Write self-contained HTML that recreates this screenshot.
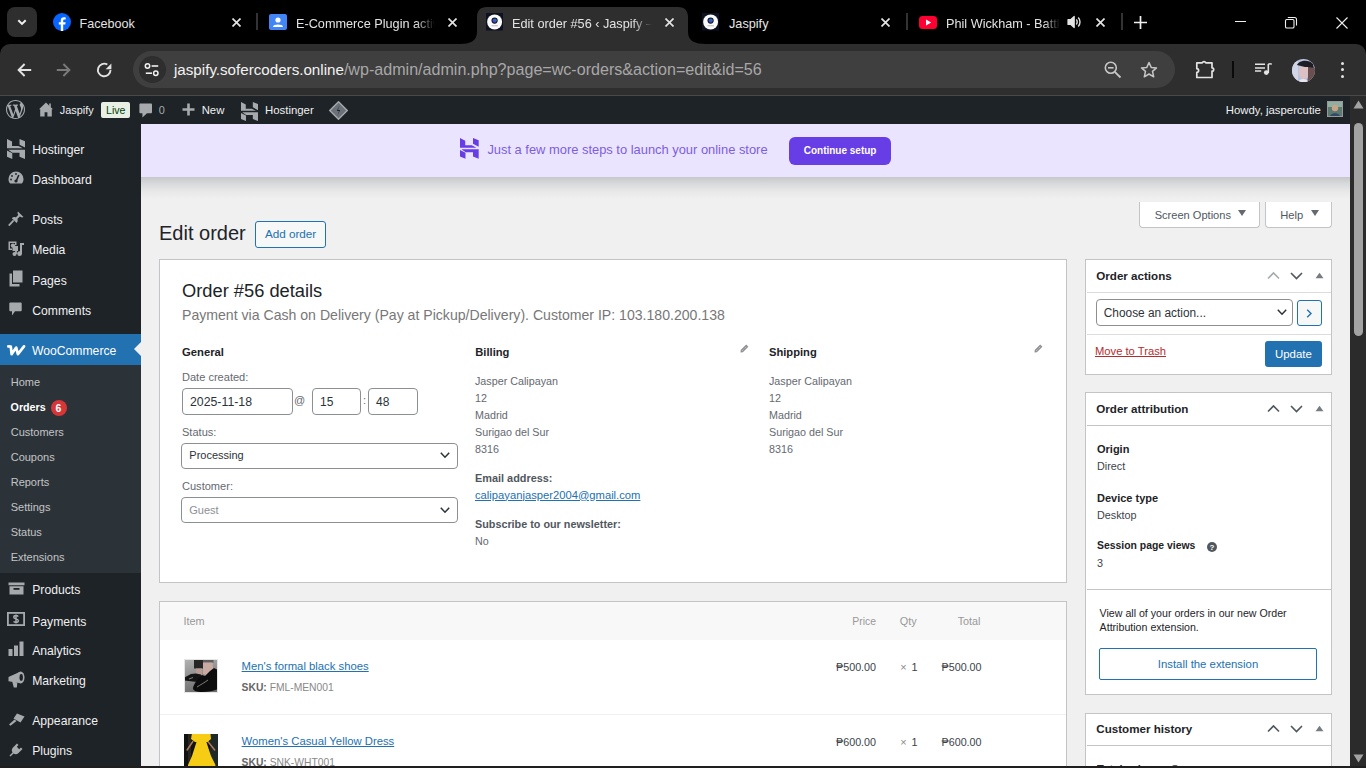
<!DOCTYPE html>
<html><head><meta charset="utf-8"><title>Edit order</title>
<style>
html,body{margin:0;padding:0;width:1366px;height:768px;overflow:hidden;background:#000;font-family:"Liberation Sans",sans-serif;}
.a{position:absolute;}
.t{position:absolute;line-height:1;white-space:nowrap;}
.fade{overflow:hidden;-webkit-mask-image:linear-gradient(90deg,#000 86%,transparent);mask-image:linear-gradient(90deg,#000 86%,transparent);}
svg{display:block;}
</style></head><body>
<div class="a" style="left:0px;top:0px;width:1366px;height:44px;background:#000"></div>
<div class="a" style="left:7px;top:7px;width:30px;height:30px;background:#2e2e2e;border-radius:8px"></div>
<svg class="a" style="left:16px;top:16px" width="12" height="12" viewBox="0 0 12 12"><path d="M2.3 4.2 L6 7.9 L9.7 4.2" fill="none" stroke="#f0f0f0" stroke-width="2"/></svg>
<svg class="a" style="left:53px;top:13px" width="18" height="18" viewBox="0 0 18 18"><circle cx="9" cy="9" r="9" fill="#0866ff"/><path d="M10.2 18 V11.6 H12.3 L12.6 9.2 H10.2 V7.8 C10.2 7.1 10.5 6.6 11.5 6.6 H12.7 V4.5 C12.4 4.4 11.7 4.3 10.9 4.3 C9 4.3 7.8 5.4 7.8 7.5 V9.2 H5.8 V11.6 H7.8 V18 Z" fill="#fff"/></svg>
<div class="t" style="left:79.6px;top:18.33px;font-size:12.6px;color:#e3e3e3;font-weight:400;">Facebook</div>
<svg class="a" style="left:231.7px;top:17.8px" width="9" height="9" viewBox="0 0 9 9"><path d="M0.5 0.5 L8.5 8.5 M8.5 0.5 L0.5 8.5" stroke="#e3e3e3" stroke-width="1.7"/></svg>
<div class="a" style="left:256px;top:13px;width:2px;height:17px;background:#333"></div>
<svg class="a" style="left:269px;top:14px" width="18" height="16" viewBox="0 0 18 16"><rect width="18" height="16" rx="2" fill="#4285f4"/><circle cx="9" cy="6" r="2.6" fill="#fff"/><path d="M4 13 C4 9.8 14 9.8 14 13 Z" fill="#fff"/></svg>
<div class="t fade" style="left:296px;top:18.2px;font-size:12.7px;color:#e3e3e3;width:139px">E-Commerce Plugin activity</div>
<svg class="a" style="left:448.0px;top:17.8px" width="9" height="9" viewBox="0 0 9 9"><path d="M0.5 0.5 L8.5 8.5 M8.5 0.5 L0.5 8.5" stroke="#e3e3e3" stroke-width="1.7"/></svg>
<svg class="a" style="left:460px;top:7px" width="246" height="37" viewBox="0 0 246 37"><path d="M0 37 C10 37 17 34 17 25 V10 C17 4 20 0 27 0 H218 C225 0 228 4 228 10 V25 C228 34 235 37 246 37 Z" fill="#2e2e2e"/></svg>
<svg class="a" style="left:486px;top:13px" width="17" height="18" viewBox="0 0 17 18"><defs><linearGradient id="lg486" x1="0" y1="1" x2="1" y2="0"><stop offset="0" stop-color="#5a2fd0"/><stop offset="0.6" stop-color="#2f5fb8"/><stop offset="1" stop-color="#1fa08a"/></linearGradient></defs><rect width="17" height="17.5" fill="#0d1122"/><circle cx="8.6" cy="8.9" r="7.5" fill="#fbfbfb"/><circle cx="8.6" cy="7.6" r="3.1" fill="#0a0f1a"/><circle cx="8.6" cy="7.6" r="2.2" fill="url(#lg486)"/><rect x="5.5" y="12.2" width="6.5" height="1.1" fill="#c0c0c0"/></svg>
<div class="t fade" style="left:512px;top:18.2px;font-size:12.7px;color:#e3e3e3;width:140px">Edit order #56 ‹ Jaspify — WordPress</div>
<svg class="a" style="left:664.7px;top:17.8px" width="9" height="9" viewBox="0 0 9 9"><path d="M0.5 0.5 L8.5 8.5 M8.5 0.5 L0.5 8.5" stroke="#e3e3e3" stroke-width="1.7"/></svg>
<svg class="a" style="left:702px;top:13px" width="17" height="18" viewBox="0 0 17 18"><defs><linearGradient id="lg702" x1="0" y1="1" x2="1" y2="0"><stop offset="0" stop-color="#5a2fd0"/><stop offset="0.6" stop-color="#2f5fb8"/><stop offset="1" stop-color="#1fa08a"/></linearGradient></defs><rect width="17" height="17.5" fill="#0d1122"/><circle cx="8.6" cy="8.9" r="7.5" fill="#fbfbfb"/><circle cx="8.6" cy="7.6" r="3.1" fill="#0a0f1a"/><circle cx="8.6" cy="7.6" r="2.2" fill="url(#lg702)"/><rect x="5.5" y="12.2" width="6.5" height="1.1" fill="#c0c0c0"/></svg>
<div class="t" style="left:729px;top:18.25px;font-size:12.7px;color:#e8e8e8;font-weight:400;">Jaspify</div>
<svg class="a" style="left:881.1px;top:17.8px" width="9" height="9" viewBox="0 0 9 9"><path d="M0.5 0.5 L8.5 8.5 M8.5 0.5 L0.5 8.5" stroke="#e3e3e3" stroke-width="1.7"/></svg>
<div class="a" style="left:906px;top:13px;width:2px;height:17px;background:#333"></div>
<svg class="a" style="left:919px;top:16px" width="18" height="13" viewBox="0 0 18 13"><rect width="18" height="13" rx="3.5" fill="#ff0033"/><path d="M7 3.6 L12.2 6.5 L7 9.4 Z" fill="#fff"/></svg>
<div class="t fade" style="left:946px;top:18.2px;font-size:12.7px;color:#e3e3e3;width:114px">Phil Wickham - Battle Belongs</div>
<svg class="a" style="left:1067px;top:15px" width="15" height="14" viewBox="0 0 15 14"><path d="M1 4.6 H3.6 L7.2 1.4 V12.6 L3.6 9.4 H1 Z" fill="#e3e3e3" stroke="#e3e3e3" stroke-width="1.2" stroke-linejoin="round"/><path d="M9.3 4.6 C10.5 5.8 10.5 8.2 9.3 9.4 M11.2 2.6 C13.6 4.9 13.6 9.1 11.2 11.4" fill="none" stroke="#e3e3e3" stroke-width="1.4"/></svg>
<svg class="a" style="left:1096.3px;top:17.8px" width="9" height="9" viewBox="0 0 9 9"><path d="M0.5 0.5 L8.5 8.5 M8.5 0.5 L0.5 8.5" stroke="#e3e3e3" stroke-width="1.7"/></svg>
<div class="a" style="left:1121px;top:13px;width:2px;height:17px;background:#333"></div>
<svg class="a" style="left:1134px;top:16px" width="13" height="13" viewBox="0 0 13 13"><path d="M6.5 0 V13 M0 6.5 H13" stroke="#f0f0f0" stroke-width="1.7"/></svg>
<div class="a" style="left:1235px;top:21px;width:11px;height:1px;background:#f0f0f0"></div>
<svg class="a" style="left:1284px;top:16px" width="14" height="13" viewBox="0 0 14 13"><rect x="1.5" y="3.5" width="8.5" height="8.5" rx="1.3" fill="none" stroke="#f0f0f0" stroke-width="1.1"/><path d="M3.8 1.5 H10.5 C11.7 1.5 12.5 2.3 12.5 3.5 V9.5" fill="none" stroke="#f0f0f0" stroke-width="1.1"/></svg>
<svg class="a" style="left:1335.5px;top:16.5px" width="12" height="12" viewBox="0 0 12 12"><path d="M0.5 0.5 L11.5 11.5 M11.5 0.5 L0.5 11.5" stroke="#f0f0f0" stroke-width="1.1"/></svg>
<div class="a" style="left:0px;top:44px;width:1366px;height:51px;background:#2e2e2e;border-radius:10px 10px 0 0"></div>
<div class="a" style="left:0px;top:95px;width:1366px;height:1px;background:#4a4a4a"></div>
<svg class="a" style="left:17px;top:62px" width="15" height="16" viewBox="0 0 15 16"><path d="M14.2 8 H2 M7.6 2 L1.6 8 L7.6 14" fill="none" stroke="#e3e3e3" stroke-width="1.9" stroke-linejoin="miter"/></svg>
<svg class="a" style="left:56px;top:62px" width="15" height="16" viewBox="0 0 15 16"><path d="M0.8 8 H13 M7.4 2 L13.4 8 L7.4 14" fill="none" stroke="#7a7a7a" stroke-width="1.9"/></svg>
<svg class="a" style="left:96px;top:62px" width="16" height="16" viewBox="0 0 16 16"><path d="M14.5 8 A6.3 6.3 0 1 1 11.35 2.54" fill="none" stroke="#e3e3e3" stroke-width="1.9"/><path d="M9.6 7.2 H15.4 V1.4 Z" fill="#e3e3e3"/></svg>
<div class="a" style="left:133px;top:51px;width:1042px;height:37px;background:#3f3f3f;border-radius:19px"></div>
<div class="a" style="left:138.5px;top:56px;width:27px;height:27px;background:#2e2e2e;border-radius:50%"></div>
<svg class="a" style="left:144px;top:62px" width="17" height="15" viewBox="0 0 17 15"><circle cx="3.5" cy="4" r="2.2" fill="none" stroke="#f0f0f0" stroke-width="1.5"/><path d="M7.6 4 H14.2" stroke="#f0f0f0" stroke-width="1.6"/><circle cx="11.8" cy="11.2" r="2.2" fill="none" stroke="#f0f0f0" stroke-width="1.5"/><path d="M1.8 11.2 H8" stroke="#f0f0f0" stroke-width="1.6"/></svg>
<div class="t" style="left:174px;top:60.86px;font-size:15.17px;color:#f2f2f2;font-weight:400;">jaspify.sofercoders.online<span style="color:#a8a8a8;font-size:16.08px">/wp-admin/admin.php?page=wc-orders&amp;action=edit&amp;id=56</span></div>
<svg class="a" style="left:1104px;top:61px" width="18" height="18" viewBox="0 0 18 18"><circle cx="6.8" cy="6.8" r="5.5" fill="none" stroke="#c7c7c7" stroke-width="1.6"/><path d="M10.8 10.8 L16.5 16.5" stroke="#c7c7c7" stroke-width="1.8"/><path d="M4 6.8 H9.6" stroke="#c7c7c7" stroke-width="1.6"/></svg>
<svg class="a" style="left:1140px;top:61px" width="18" height="18" viewBox="0 0 18 18"><path d="M9 1.5 L11.2 6.4 L16.5 6.9 L12.5 10.4 L13.7 15.8 L9 13 L4.3 15.8 L5.5 10.4 L1.5 6.9 L6.8 6.4 Z" fill="none" stroke="#c7c7c7" stroke-width="1.5" stroke-linejoin="round"/></svg>
<svg class="a" style="left:1195px;top:59px" width="20" height="21" viewBox="0 0 20 21"><path d="M1.8 3.8 H7.2 A2 2 0 0 1 10.8 3.8 H17 V8.8 A1.7 1.7 0 0 1 17 12.2 V18.5 H1.8 V13.3 A1.8 1.8 0 0 0 1.8 9.7 Z" fill="none" stroke="#e3e3e3" stroke-width="1.7" stroke-linejoin="round"/></svg>
<div class="a" style="left:1232px;top:61px;width:2px;height:17px;background:#0a0a0a"></div>
<svg class="a" style="left:1254px;top:60px" width="19" height="17" viewBox="0 0 19 17"><path d="M1 4.3 H11 M1 7.9 H11 M1 11.1 H7.2" stroke="#e3e3e3" stroke-width="1.5"/><path d="M14.3 4 V13" stroke="#e3e3e3" stroke-width="1.6"/><path d="M14.3 3.9 H17.8" stroke="#e3e3e3" stroke-width="1.5"/><circle cx="12.3" cy="12.6" r="2.4" fill="#e3e3e3"/></svg>
<svg class="a" style="left:1292px;top:59px" width="23" height="23" viewBox="0 0 23 23"><defs><clipPath id="av"><circle cx="11.5" cy="11.5" r="11.5"/></clipPath></defs><g clip-path="url(#av)"><rect width="23" height="23" fill="#b9c2dc"/><rect x="0" y="0" width="6" height="23" fill="#d0d6e8"/><path d="M5 6 C7 1 17 0 21 5 L22 10 L17 9 L9 7 Z" fill="#1c1c24"/><path d="M7 8 L16 8 L17 14 L15 19 L10 20 L7 16 Z" fill="#dcc0c4"/><path d="M16 8 L23 9 V23 H15 L16 18 Z" fill="#6a4f50"/><path d="M6 23 C8 19 14 19 17 23 Z" fill="#e9e6ef"/></g></svg>
<div class="a" style="left:1341px;top:61.9px;width:3.2px;height:3.2px;background:#e3e3e3;border-radius:50%"></div>
<div class="a" style="left:1341px;top:68.2px;width:3.2px;height:3.2px;background:#e3e3e3;border-radius:50%"></div>
<div class="a" style="left:1341px;top:74.5px;width:3.2px;height:3.2px;background:#e3e3e3;border-radius:50%"></div>
<div class="a" style="left:0px;top:96px;width:1350px;height:28px;background:#1d2327"></div>
<svg class="a" style="left:6px;top:100px" width="19" height="19" viewBox="0 0 20 20"><path fill="#a7aaad" d="M20 10c0-5.51-4.49-10-10-10C4.48 0 0 4.49 0 10c0 5.52 4.48 10 10 10 5.51 0 10-4.48 10-10zM7.78 15.37L4.37 6.22c.55-.02 1.17-.08 1.17-.08.5-.06.44-1.13-.06-1.11 0 0-1.45.11-2.37.11-.18 0-.37 0-.58-.01C4.12 2.69 6.87 1.11 10 1.11c2.33 0 4.45.87 6.05 2.34-.68-.11-1.65.39-1.65 1.58 0 .74.45 1.36.9 2.1.35.61.55 1.36.55 2.46 0 1.49-1.4 5-1.4 5l-3.03-8.37c.54-.02.82-.17.82-.17.5-.05.44-1.25-.06-1.22 0 0-1.44.12-2.38.12-.87 0-2.33-.12-2.33-.12-.5-.03-.56 1.2-.06 1.22l.92.08 1.26 3.41zM17.41 10c.24-.64.74-1.87.43-4.25.7 1.29 1.05 2.71 1.05 4.25 0 3.29-1.73 6.24-4.4 7.78.97-2.59 1.94-5.2 2.92-7.78zM6.1 18.09C3.12 16.65 1.11 13.53 1.11 10c0-1.3.23-2.48.72-3.59 1.42 3.89 2.84 7.79 4.27 11.68zm4.03-6.63l2.62 7.1c-.87.29-1.8.44-2.75.44-.8 0-1.58-.11-2.33-.33 .82-2.41 1.64-4.81 2.46-7.21z"/></svg>
<svg class="a" style="left:39px;top:102px" width="14" height="15" viewBox="0 0 14 15"><path d="M7 0.5 L0 7.3 L1.2 7.3 V14.5 H5.6 V10.2 H8.4 V14.5 H12.8 V7.3 L14 7.3 L11.8 5.2 V1.5 H10.2 V3.7 Z" fill="#a7aaad"/></svg>
<div class="t" style="left:59.8px;top:105.07px;font-size:10.9px;color:#f0f0f1;font-weight:400;">Jaspify</div>
<div class="a" style="left:101px;top:102px;width:29px;height:16px;background:#e8f0e6;border-radius:2px"></div>
<div class="t" style="left:106px;top:105.32px;font-size:10.6px;color:#00400a;font-weight:400;">Live</div>
<svg class="a" style="left:138.5px;top:102.5px" width="14" height="15" viewBox="0 0 14 15"><path d="M1.5 0.5 H11.8 C12.6 0.5 13 0.9 13 1.7 V9 C13 9.8 12.6 10.3 11.8 10.3 H8 L3.4 14.5 V10.3 H1.5 C0.8 10.3 0.4 9.8 0.4 9 V1.7 C0.4 0.9 0.8 0.5 1.5 0.5 Z" fill="#a7aaad"/></svg>
<div class="t" style="left:158.8px;top:105.07px;font-size:10.9px;color:#a7aaad;font-weight:400;">0</div>
<svg class="a" style="left:182px;top:103px" width="13" height="13" viewBox="0 0 13 13"><path d="M6.5 0.5 V12.5 M0.5 6.5 H12.5" stroke="#a7aaad" stroke-width="2.6"/></svg>
<div class="t" style="left:201.7px;top:104.73px;font-size:11.3px;color:#f0f0f1;font-weight:400;">New</div>
<svg class="a" style="left:241px;top:102px" width="17" height="19" viewBox="0 0 410 455" preserveAspectRatio="none"><path fill="#a7aaad" d="M0 0 L115 58 L115 160 L260 160 L360 212 L0 212 Z M285 0 L410 50 L410 195 L285 128 Z M30 245 L410 245 L410 455 L285 405 L285 312 L125 312 Z M0 262 L120 322 L120 455 L0 405 Z"/></svg>
<div class="t" style="left:265px;top:104.65px;font-size:11.4px;color:#f0f0f1;font-weight:400;">Hostinger</div>
<svg class="a" style="left:329px;top:101px" width="19" height="19" viewBox="0 0 19 19"><path d="M9.5 0.8 L18.2 9.5 L9.5 18.2 L0.8 9.5 Z" fill="#6b7178" stroke="#a7aaad" stroke-width="1.4"/><path d="M10.5 4.5 L7.8 10 H10 L8.5 14.5 L11.2 9 H9 Z" fill="#1d2327"/></svg>
<div class="t" style="left:1225.8px;top:104.67px;font-size:11.37px;color:#f0f0f1;font-weight:400;">Howdy, jaspercutie</div>
<svg class="a" style="left:1327px;top:101px" width="16" height="16" viewBox="0 0 16 16"><rect width="16" height="16" fill="#5c7a6e"/><rect x="0" y="0" width="16" height="6" fill="#8fb0a0"/><circle cx="8" cy="7" r="3.2" fill="#c9a38a"/><path d="M3 16 C3 11 13 11 13 16 Z" fill="#2e4a6a"/><rect x="0.5" y="0.5" width="15" height="15" fill="none" stroke="#999" stroke-width="1"/></svg>
<div class="a" style="left:1350px;top:96px;width:16px;height:670px;background:#2b2b2b"></div>
<svg class="a" style="left:1353px;top:100px" width="11" height="9" viewBox="0 0 11 9"><path d="M5.5 0.5 L10.5 8.5 H0.5 Z" fill="#a3a3a3"/></svg>
<div class="a" style="left:1354px;top:123px;width:9px;height:213px;background:#a3a3a3;border-radius:5px"></div>
<svg class="a" style="left:1353px;top:752px" width="11" height="9" viewBox="0 0 11 9"><path d="M5.5 8.5 L10.5 0.5 H0.5 Z" fill="#a3a3a3"/></svg>
<div class="a" style="left:0px;top:766px;width:1366px;height:2px;background:#1f1f1f"></div>
<div class="a" style="left:141px;top:124px;width:1209px;height:642px;background:#f0f0f1"></div>
<div class="a" style="left:0px;top:124px;width:141px;height:642px;background:#1d2327"></div>
<div class="a" style="left:0px;top:334px;width:141px;height:31px;background:#2271b1"></div>
<svg class="a" style="left:134px;top:342px" width="7" height="14" viewBox="0 0 7 14"><path d="M7 0 L0 7 L7 14 Z" fill="#f0f0f1"/></svg>
<div class="a" style="left:0px;top:365px;width:141px;height:208px;background:#2c3338"></div>
<svg class="a" style="left:7px;top:139px" width="18" height="20" viewBox="0 0 410 455" preserveAspectRatio="none"><path fill="#a7aaad" d="M0 0 L115 58 L115 160 L260 160 L360 212 L0 212 Z M285 0 L410 50 L410 195 L285 128 Z M30 245 L410 245 L410 455 L285 405 L285 312 L125 312 Z M0 262 L120 322 L120 455 L0 405 Z"/></svg>
<div class="t" style="left:32.2px;top:143.97px;font-size:12.2px;color:#f0f0f1;font-weight:400;">Hostinger</div>
<svg class="a" style="left:8px;top:171px" width="16" height="13" viewBox="0 0 16 13"><path d="M8 0.5 A7.5 7.5 0 0 0 0.5 8 C0.5 10 1.2 11.5 2.2 12.5 H13.8 C14.8 11.5 15.5 10 15.5 8 A7.5 7.5 0 0 0 8 0.5 Z" fill="#a7aaad"/><path d="M8 10.5 L10.8 4" stroke="#1d2327" stroke-width="1.6"/><circle cx="8" cy="10" r="1.6" fill="#1d2327"/><circle cx="4" cy="5" r="0.9" fill="#1d2327"/><circle cx="8" cy="3" r="0.9" fill="#1d2327"/><circle cx="3" cy="8.5" r="0.9" fill="#1d2327"/></svg>
<div class="t" style="left:32.2px;top:174.07px;font-size:12.2px;color:#f0f0f1;font-weight:400;">Dashboard</div>
<svg class="a" style="left:8px;top:211px" width="16" height="15" viewBox="0 0 16 15"><path d="M10 0.5 L15.5 6 L14 6.5 L11.8 5.6 L9.4 8 C10 9.6 9.6 11 8.6 12 L3.8 7.2 C4.8 6.2 6.4 5.8 7.8 6.4 L10.2 4 L9.4 2 Z" fill="#a7aaad"/><path d="M5.6 9.4 L0.8 14.6" stroke="#a7aaad" stroke-width="1.8"/></svg>
<div class="t" style="left:32.2px;top:214.27px;font-size:12.2px;color:#f0f0f1;font-weight:400;">Posts</div>
<svg class="a" style="left:7.5px;top:241px" width="17" height="15" viewBox="0 0 17 15"><path d="M0.5 0.5 H8.5 V4 H7 V2 H2 V7.5 H4 V9 H0.5 Z" fill="#a7aaad"/><circle cx="5" cy="4.6" r="2.2" fill="#a7aaad"/><rect x="4.5" y="5" width="5.5" height="5" fill="#a7aaad"/><path d="M12 2 H16 V4 H14 V12.5 A2.4 2.4 0 1 1 12 10.2 Z" fill="#a7aaad"/><circle cx="6.5" cy="13" r="2" fill="#a7aaad"/><path d="M8 13 V9" stroke="#a7aaad" stroke-width="1.8"/></svg>
<div class="t" style="left:32.2px;top:244.37px;font-size:12.2px;color:#f0f0f1;font-weight:400;">Media</div>
<svg class="a" style="left:9px;top:270px" width="14" height="17" viewBox="0 0 14 17"><path d="M4 0.5 H13.5 V12.5 H4 Z" fill="#a7aaad"/><path d="M0.5 3.5 H3 V14 H10.5 V16.5 H0.5 Z" fill="#a7aaad"/></svg>
<div class="t" style="left:32.2px;top:274.67px;font-size:12.2px;color:#f0f0f1;font-weight:400;">Pages</div>
<svg class="a" style="left:9.4px;top:302px" width="13" height="14" viewBox="0 0 13 14"><path d="M1.5 0.5 H11.5 C12.3 0.5 12.7 1 12.7 1.8 V8 C12.7 8.8 12.3 9.3 11.5 9.3 H6 L3 13.5 V9.3 H1.5 C0.8 9.3 0.3 8.8 0.3 8 V1.8 C0.3 1 0.8 0.5 1.5 0.5 Z" fill="#a7aaad"/></svg>
<div class="t" style="left:32.2px;top:304.97px;font-size:12.2px;color:#f0f0f1;font-weight:400;">Comments</div>
<svg class="a" style="left:7px;top:345px" width="19" height="11" viewBox="0 0 19 11"><path d="M1.3 1.4 L3.8 1.6 L4.6 9.2 L9.2 2.6 L10.9 9.2 L17 1.4" fill="none" stroke="#fff" stroke-width="2.7" stroke-linejoin="round" stroke-linecap="round"/></svg>
<div class="t" style="left:31.9px;top:344.67px;font-size:12.2px;color:#fff;font-weight:400;">WooCommerce</div>
<div class="t" style="left:10.7px;top:376.89px;font-size:11.0px;color:#c3c4c7;font-weight:400;">Home</div>
<div class="t" style="left:10.6px;top:401.84px;font-size:10.7px;color:#fff;font-weight:700;">Orders</div>
<div class="a" style="left:51px;top:400px;width:16px;height:16px;background:#d63638;border-radius:50%"></div>
<div class="t" style="left:55.6px;top:403.41px;font-size:10.5px;color:#fff;font-weight:700;">6</div>
<div class="t" style="left:10.7px;top:426.79px;font-size:11.0px;color:#c3c4c7;font-weight:400;">Customers</div>
<div class="t" style="left:10.7px;top:451.79px;font-size:11.0px;color:#c3c4c7;font-weight:400;">Coupons</div>
<div class="t" style="left:10.7px;top:476.79px;font-size:11.0px;color:#c3c4c7;font-weight:400;">Reports</div>
<div class="t" style="left:10.7px;top:501.79px;font-size:11.0px;color:#c3c4c7;font-weight:400;">Settings</div>
<div class="t" style="left:10.7px;top:526.79px;font-size:11.0px;color:#c3c4c7;font-weight:400;">Status</div>
<div class="t" style="left:10.7px;top:551.79px;font-size:11.0px;color:#c3c4c7;font-weight:400;">Extensions</div>
<svg class="a" style="left:8px;top:582px" width="17" height="13" viewBox="0 0 17 13"><path d="M0.5 0.5 H16.5 V3.3 H0.5 Z M1.5 4.3 H15.5 V12.5 H1.5 Z" fill="#a7aaad"/><rect x="5.5" y="6" width="6" height="1.8" fill="#1d2327"/></svg>
<div class="t" style="left:32.2px;top:584.07px;font-size:12.2px;color:#f0f0f1;font-weight:400;">Products</div>
<svg class="a" style="left:7px;top:612px" width="18" height="14" viewBox="0 0 18 14"><rect x="0.9" y="0.9" width="16.2" height="12.2" fill="none" stroke="#a7aaad" stroke-width="1.8"/><path d="M11.2 4.6 C10.8 3.9 10 3.6 9 3.6 C7.6 3.6 6.8 4.3 6.8 5.2 C6.8 7.4 11.3 6.4 11.3 8.7 C11.3 9.7 10.4 10.4 9 10.4 C7.9 10.4 7 10 6.6 9.3 M9 2.4 V11.6" fill="none" stroke="#a7aaad" stroke-width="1.5"/></svg>
<div class="t" style="left:32.2px;top:615.77px;font-size:12.2px;color:#f0f0f1;font-weight:400;">Payments</div>
<svg class="a" style="left:8px;top:641px" width="16" height="15" viewBox="0 0 16 15"><rect x="0.5" y="8" width="4" height="7" fill="#a7aaad"/><rect x="6" y="4.5" width="4" height="10.5" fill="#a7aaad"/><rect x="11.5" y="0.5" width="4" height="14.5" fill="#a7aaad"/></svg>
<div class="t" style="left:32.2px;top:644.87px;font-size:12.2px;color:#f0f0f1;font-weight:400;">Analytics</div>
<svg class="a" style="left:7.6px;top:670.5px" width="17" height="17" viewBox="0 0 17 17"><path d="M0.5 6 L11.5 1 V12 L0.5 10.2 Z" fill="#a7aaad"/><ellipse cx="12.6" cy="6.4" rx="3.9" ry="6" fill="#a7aaad"/><ellipse cx="13.2" cy="6.4" rx="1.7" ry="3.4" fill="#1d2327"/><path d="M4.2 10.4 L9.4 11.4 L8.8 16.6 L5.8 16.6 Z" fill="#a7aaad"/></svg>
<div class="t" style="left:32.2px;top:675.17px;font-size:12.2px;color:#f0f0f1;font-weight:400;">Marketing</div>
<svg class="a" style="left:7.6px;top:713px" width="17" height="13" viewBox="0 0 17 13"><path d="M9 0.5 L16.5 3.5 L12.5 9.5 L5.5 5.5 Z" fill="#a7aaad"/><path d="M6.5 6.5 L1 11.5 L2.5 12.8 L8.5 8 Z" fill="#a7aaad"/></svg>
<div class="t" style="left:32.2px;top:714.57px;font-size:12.2px;color:#f0f0f1;font-weight:400;">Appearance</div>
<svg class="a" style="left:9px;top:743px" width="14" height="14" viewBox="0 0 14 14"><path d="M8 0.5 L9.5 2 L7.8 3.8 L10.2 6.2 L12 4.5 L13.5 6 L9.5 10 C8 11.5 6 11.5 4.5 10.5 L1.5 13.5 L0.5 12.5 L3.5 9.5 C2.5 8 2.5 6 4 4.5 Z" fill="#a7aaad"/></svg>
<div class="t" style="left:32.2px;top:744.67px;font-size:12.2px;color:#f0f0f1;font-weight:400;">Plugins</div>
<div class="a" style="left:141px;top:177px;width:1209px;height:22px;background:linear-gradient(#c6c7c9,#d8d9db 30%,#e8e8e9 65%,#f0f0f1)"></div>
<div class="a" style="left:141px;top:124px;width:1209px;height:53px;background:#ebe4ff"></div>
<svg class="a" style="left:460.2px;top:138px" width="18.7" height="20.7" viewBox="0 0 410 455" preserveAspectRatio="none"><path fill="#673de6" d="M0 0 L115 58 L115 160 L260 160 L360 212 L0 212 Z M285 0 L410 50 L410 195 L285 128 Z M30 245 L410 245 L410 455 L285 405 L285 312 L125 312 Z M0 262 L120 322 L120 455 L0 405 Z"/></svg>
<div class="t" style="left:487.4px;top:144.08px;font-size:12.9px;color:#7b5ee0;font-weight:400;">Just a few more steps to launch your online store</div>
<div class="a" style="left:789px;top:137px;width:102px;height:28px;background:#673de6;border-radius:6px"></div>
<div class="t" style="left:803.7px;top:146.03px;font-size:10.0px;color:#fff;font-weight:700;">Continue setup</div>
<div class="t" style="left:159.0px;top:223.07px;font-size:20.0px;color:#1d2327;font-weight:400;">Edit order</div>
<div class="a" style="left:255.4px;top:221.4px;width:70.3px;height:26.3px;background:#f6f7f7;border:1px solid #2271b1;border-radius:3px;box-sizing:border-box"></div>
<div class="t" style="left:264.9px;top:227.69px;font-size:11.7px;color:#2271b1;font-weight:400;">Add order</div>
<div class="a" style="left:1139px;top:202px;width:121px;height:25.5px;background:#fff;border:1px solid #c3c4c7;border-top:none;border-radius:0 0 4px 4px;box-sizing:border-box"></div>
<div class="t" style="left:1154.7px;top:209.63px;font-size:11.07px;color:#50575e;font-weight:400;">Screen Options</div>
<svg class="a" style="left:1238px;top:210px" width="8" height="6" viewBox="0 0 8 6"><path d="M0 0 H8 L4 6 Z" fill="#646970"/></svg>
<div class="a" style="left:1265px;top:202px;width:67px;height:25.5px;background:#fff;border:1px solid #c3c4c7;border-top:none;border-radius:0 0 4px 4px;box-sizing:border-box"></div>
<div class="t" style="left:1280.3px;top:209.53px;font-size:11.18px;color:#50575e;font-weight:400;">Help</div>
<svg class="a" style="left:1310.5px;top:210px" width="8" height="6" viewBox="0 0 8 6"><path d="M0 0 H8 L4 6 Z" fill="#646970"/></svg>
<div class="a" style="left:159.3px;top:259.4px;width:908px;height:323.5px;background:#fff;border:1px solid #c3c4c7;box-sizing:border-box"></div>
<div class="t" style="left:182px;top:282.01px;font-size:18.3px;color:#1d2327;font-weight:400;">Order #56 details</div>
<div class="t" style="left:182px;top:307.76px;font-size:14.1px;color:#777;font-weight:400;">Payment via Cash on Delivery (Pay at Pickup/Delivery). Customer IP: 103.180.200.138</div>
<div class="t" style="left:182px;top:346.55px;font-size:11.28px;color:#1d2327;font-weight:700;">General</div>
<div class="t" style="left:182px;top:371.54px;font-size:11.06px;color:#646970;font-weight:400;">Date created:</div>
<div class="a" style="left:182px;top:388.2px;width:111px;height:27px;background:#fff;border:1px solid #8c8f94;border-radius:4px;box-sizing:border-box"></div>
<div class="t" style="left:190px;top:395.79px;font-size:12.3px;color:#2c3338;font-weight:400;">2025-11-18</div>
<div class="t" style="left:294px;top:395.19px;font-size:11.0px;color:#646970;font-weight:400;">@</div>
<div class="a" style="left:312.2px;top:388.2px;width:49px;height:27px;background:#fff;border:1px solid #8c8f94;border-radius:4px;box-sizing:border-box"></div>
<div class="t" style="left:320px;top:396.04px;font-size:12.0px;color:#2c3338;font-weight:400;">15</div>
<div class="t" style="left:363px;top:395.19px;font-size:11.0px;color:#646970;font-weight:400;">:</div>
<div class="a" style="left:368px;top:388.2px;width:49.6px;height:27px;background:#fff;border:1px solid #8c8f94;border-radius:4px;box-sizing:border-box"></div>
<div class="t" style="left:376px;top:396.04px;font-size:12.0px;color:#2c3338;font-weight:400;">48</div>
<div class="t" style="left:182px;top:426.94px;font-size:11.06px;color:#646970;font-weight:400;">Status:</div>
<div class="a" style="left:181.4px;top:442.5px;width:276.3px;height:26.3px;background:#fff;border:1px solid #8c8f94;border-radius:4px;box-sizing:border-box"></div>
<div class="t" style="left:189.3px;top:450.29px;font-size:11.0px;color:#2c3338;font-weight:400;">Processing</div>
<svg class="a" style="left:440px;top:452px" width="10" height="7" viewBox="0 0 10 7"><path d="M0.8 0.8 L5 5.2 L9.2 0.8" fill="none" stroke="#2c3338" stroke-width="1.5"/></svg>
<div class="t" style="left:182px;top:480.64px;font-size:11.06px;color:#646970;font-weight:400;">Customer:</div>
<div class="a" style="left:181.4px;top:497.4px;width:276.3px;height:25.5px;background:#fff;border:1px solid #8c8f94;border-radius:4px;box-sizing:border-box"></div>
<div class="t" style="left:189.3px;top:504.89px;font-size:11.0px;color:#8c8f94;font-weight:400;">Guest</div>
<svg class="a" style="left:440px;top:507px" width="10" height="7" viewBox="0 0 10 7"><path d="M0.8 0.8 L5 5.2 L9.2 0.8" fill="none" stroke="#2c3338" stroke-width="1.5"/></svg>
<div class="t" style="left:475.3px;top:347.35px;font-size:11.16px;color:#1d2327;font-weight:700;">Billing</div>
<svg class="a" style="left:740.4px;top:344.3px" width="9" height="9" viewBox="0 0 9 9"><path d="M6.2 0.6 L8.4 2.8 L2.9 8.3 L0.5 8.5 L0.7 6.1 Z" fill="#8f9195"/><path d="M2.2 6.8 L6.6 2.4" stroke="#d8d8d8" stroke-width="0.9" stroke-dasharray="1 1"/></svg>
<div class="t" style="left:475px;top:376.01px;font-size:10.74px;color:#646970;font-weight:400;">Jasper Calipayan</div>
<div class="t" style="left:475px;top:393.01px;font-size:10.74px;color:#646970;font-weight:400;">12</div>
<div class="t" style="left:475px;top:410.01px;font-size:10.74px;color:#646970;font-weight:400;">Madrid</div>
<div class="t" style="left:475px;top:427.01px;font-size:10.74px;color:#646970;font-weight:400;">Surigao del Sur</div>
<div class="t" style="left:475px;top:444.01px;font-size:10.74px;color:#646970;font-weight:400;">8316</div>
<div class="t" style="left:475px;top:472.77px;font-size:10.9px;color:#50575e;font-weight:700;">Email address:</div>
<div class="t" style="left:475px;top:489.50px;font-size:11.22px;color:#2271b1;font-weight:400;text-decoration:underline">calipayanjasper2004@gmail.com</div>
<div class="t" style="left:475px;top:519.25px;font-size:10.81px;color:#50575e;font-weight:700;">Subscribe to our newsletter:</div>
<div class="t" style="left:475px;top:535.91px;font-size:10.74px;color:#646970;font-weight:400;">No</div>
<div class="t" style="left:769px;top:347.35px;font-size:11.16px;color:#1d2327;font-weight:700;">Shipping</div>
<svg class="a" style="left:1034.4px;top:344.3px" width="9" height="9" viewBox="0 0 9 9"><path d="M6.2 0.6 L8.4 2.8 L2.9 8.3 L0.5 8.5 L0.7 6.1 Z" fill="#8f9195"/><path d="M2.2 6.8 L6.6 2.4" stroke="#d8d8d8" stroke-width="0.9" stroke-dasharray="1 1"/></svg>
<div class="t" style="left:769px;top:376.01px;font-size:10.74px;color:#646970;font-weight:400;">Jasper Calipayan</div>
<div class="t" style="left:769px;top:393.01px;font-size:10.74px;color:#646970;font-weight:400;">12</div>
<div class="t" style="left:769px;top:410.01px;font-size:10.74px;color:#646970;font-weight:400;">Madrid</div>
<div class="t" style="left:769px;top:427.01px;font-size:10.74px;color:#646970;font-weight:400;">Surigao del Sur</div>
<div class="t" style="left:769px;top:444.01px;font-size:10.74px;color:#646970;font-weight:400;">8316</div>
<div class="a" style="left:159.3px;top:601.4px;width:908px;height:170px;background:#fff;border:1px solid #c3c4c7;box-sizing:border-box"></div>
<div class="a" style="left:160.3px;top:602.4px;width:906px;height:38px;background:#f8f8f8"></div>
<div class="t" style="left:183.4px;top:615.67px;font-size:10.9px;color:#999;font-weight:400;">Item</div>
<div class="t" style="left:852.3px;top:616.55px;font-size:10.45px;color:#999;font-weight:400;">Price</div>
<div class="t" style="left:899.8px;top:616.17px;font-size:10.9px;color:#999;font-weight:400;">Qty</div>
<div class="t" style="left:957.7px;top:616.26px;font-size:10.8px;color:#999;font-weight:400;">Total</div>
<div class="a" style="left:160.3px;top:714px;width:906px;height:1px;background:#f0f0f0"></div>
<svg class="a" style="left:184px;top:659px" width="34" height="34" viewBox="0 0 34 34"><defs><linearGradient id="sg" x1="0" y1="0" x2="0.3" y2="1"><stop offset="0" stop-color="#b4b4b4"/><stop offset="1" stop-color="#6e6e6e"/></linearGradient></defs><rect width="34" height="34" fill="url(#sg)"/><rect x="10" y="0" width="9" height="9.5" fill="#262626"/><rect x="19" y="0" width="10.5" height="3.8" fill="#5e5e5e"/><path d="M12 9.5 H18 V16 H12 Z" fill="#b89c94"/><path d="M19 3.5 H28.5 L29 10 L22 16 L19 15 Z" fill="#c9aaa2"/><path d="M0.5 18.5 L7 15 L12 14.5 L17 15.5 L19.5 20 L13 23 L0.5 21.5 Z" fill="#141414"/><path d="M9 29 C10 24 14 20 18 16 L21 17 L26 12 L30 9 L34 11 V30 C30 32 24 33 18 33 C13 33 9 32 9 29 Z" fill="#0c0c0c"/><path d="M13 28 C16 26 20 24 24 21" stroke="#8a8a8a" stroke-width="0.9" fill="none"/><path d="M5 20 L9 18.5" stroke="#9a9a9a" stroke-width="0.8"/><rect x="0.5" y="0.5" width="33" height="33" fill="none" stroke="#e6e6e6"/></svg>
<div class="t" style="left:241.6px;top:661.43px;font-size:11.3px;color:#2271b1;font-weight:400;text-decoration:underline">Men&#x27;s formal black shoes</div>
<div class="t" style="left:241.6px;top:683.28px;font-size:10.3px;color:#888;font-weight:400;"><b style="color:#666">SKU:</b> FML-MEN001</div>
<div class="t" style="left:836px;top:661.89px;font-size:10.76px;color:#3c434a;font-weight:400;">₱500.00</div>
<div class="t" style="left:900.2px;top:661.77px;font-size:10.9px;color:#888;font-weight:400;">×</div>
<div class="t" style="left:911.5px;top:661.77px;font-size:10.9px;color:#3c434a;font-weight:400;">1</div>
<div class="t" style="left:941.5px;top:661.89px;font-size:10.76px;color:#3c434a;font-weight:400;">₱500.00</div>
<svg class="a" style="left:184px;top:734px" width="34" height="34" viewBox="0 0 34 34"><rect width="34" height="34" fill="#101312"/><rect x="26" y="0" width="8" height="34" fill="#1f2a28"/><rect x="4" y="0" width="3" height="34" fill="#2a2520"/><path d="M8.8 7.5 L3.1 16 M23.9 7.5 L30.7 16" stroke="#b07a5c" stroke-width="1.5" stroke-linecap="round"/><path d="M7.8 0 H26.5 L27 5 L23.5 8 L22.4 8 L27 22 L31.5 31 L31 34 H4 L4 31 L8 22 L12.5 8 L11 8 L7 5 Z" fill="#f6cc14"/></svg>
<div class="t" style="left:241.6px;top:736.43px;font-size:11.3px;color:#2271b1;font-weight:400;text-decoration:underline">Women&#x27;s Casual Yellow Dress</div>
<div class="t" style="left:241.6px;top:758.28px;font-size:10.3px;color:#888;font-weight:400;"><b style="color:#666">SKU:</b> SNK-WHT001</div>
<div class="t" style="left:836px;top:736.89px;font-size:10.76px;color:#3c434a;font-weight:400;">₱600.00</div>
<div class="t" style="left:900.2px;top:736.77px;font-size:10.9px;color:#888;font-weight:400;">×</div>
<div class="t" style="left:911.5px;top:736.77px;font-size:10.9px;color:#3c434a;font-weight:400;">1</div>
<div class="t" style="left:941.5px;top:736.89px;font-size:10.76px;color:#3c434a;font-weight:400;">₱600.00</div>
<div class="a" style="left:1085px;top:259px;width:247px;height:116px;background:#fff;border:1px solid #c3c4c7;box-sizing:border-box"></div>
<div class="t" style="left:1096.3px;top:269.68px;font-size:11.6px;color:#1d2327;font-weight:700;">Order actions</div>
<svg class="a" style="left:1267px;top:269.7px" width="60" height="12" viewBox="0 0 60 12"><path d="M1 8.5 L6.5 3 L12 8.5" fill="none" stroke="#a7aaad" stroke-width="1.6"/><path d="M24 3 L29.5 8.5 L35 3" fill="none" stroke="#50575e" stroke-width="1.6"/><path d="M48.5 8.3 L52.5 2.8 L56.5 8.3 Z" fill="#787c82"/></svg>
<div class="a" style="left:1086.5px;top:292px;width:244.1px;height:1px;background:#dcdcde"></div>
<div class="a" style="left:1096.2px;top:299.2px;width:197.3px;height:26.4px;background:#fff;border:1px solid #8c8f94;border-radius:4px;box-sizing:border-box"></div>
<div class="t" style="left:1103.8px;top:308.16px;font-size:11.86px;color:#2c3338;font-weight:400;">Choose an action...</div>
<svg class="a" style="left:1277px;top:309px" width="10" height="7" viewBox="0 0 10 7"><path d="M0.8 0.8 L5 5.2 L9.2 0.8" fill="none" stroke="#2c3338" stroke-width="1.5"/></svg>
<div class="a" style="left:1297.2px;top:300.4px;width:24.6px;height:25.2px;background:#f6f7f7;border:1px solid #2271b1;border-radius:3px;box-sizing:border-box"></div>
<svg class="a" style="left:1306px;top:309px" width="7" height="9" viewBox="0 0 7 9"><path d="M1.2 0.8 L5 4.5 L1.2 8.2" fill="none" stroke="#2271b1" stroke-width="1.4"/></svg>
<div class="a" style="left:1086.5px;top:333.6px;width:244.1px;height:1px;background:#dcdcde"></div>
<div class="t" style="left:1095px;top:346.01px;font-size:11.21px;color:#b32d2e;font-weight:400;text-decoration:underline">Move to Trash</div>
<div class="a" style="left:1265px;top:341px;width:56.8px;height:25.8px;background:#2271b1;border-radius:3px"></div>
<div class="t" style="left:1275px;top:349.31px;font-size:11.44px;color:#fff;font-weight:400;">Update</div>
<div class="a" style="left:1085px;top:392px;width:247px;height:303px;background:#fff;border:1px solid #c3c4c7;box-sizing:border-box"></div>
<div class="t" style="left:1096.3px;top:403.08px;font-size:11.6px;color:#1d2327;font-weight:700;">Order attribution</div>
<svg class="a" style="left:1267px;top:403.1px" width="60" height="12" viewBox="0 0 60 12"><path d="M1 8.5 L6.5 3 L12 8.5" fill="none" stroke="#50575e" stroke-width="1.6"/><path d="M24 3 L29.5 8.5 L35 3" fill="none" stroke="#50575e" stroke-width="1.6"/><path d="M48.5 8.3 L52.5 2.8 L56.5 8.3 Z" fill="#787c82"/></svg>
<div class="a" style="left:1086.5px;top:425.2px;width:244.1px;height:1px;background:#c3c4c7"></div>
<div class="t" style="left:1097px;top:443.99px;font-size:11.0px;color:#1d2327;font-weight:700;font-weight:600">Origin</div>
<div class="t" style="left:1097px;top:461.06px;font-size:10.8px;color:#3c434a;font-weight:400;">Direct</div>
<div class="t" style="left:1097px;top:492.69px;font-size:11.0px;color:#1d2327;font-weight:700;">Device type</div>
<div class="t" style="left:1097px;top:510.36px;font-size:10.8px;color:#3c434a;font-weight:400;">Desktop</div>
<div class="t" style="left:1097px;top:541.39px;font-size:10.41px;color:#1d2327;font-weight:700;">Session page views</div>
<svg class="a" style="left:1206.5px;top:541.5px" width="10" height="10" viewBox="0 0 10 10"><circle cx="5" cy="5" r="5" fill="#50575e"/><text x="5" y="8.2" font-size="8" font-weight="700" text-anchor="middle" fill="#fff" font-family="Liberation Sans">?</text></svg>
<div class="t" style="left:1097px;top:557.86px;font-size:10.8px;color:#3c434a;font-weight:400;">3</div>
<div class="a" style="left:1086.5px;top:589px;width:244.1px;height:1px;background:#c3c4c7"></div>
<div class="t" style="left:1099.6px;top:607.69px;font-size:10.64px;color:#1d2327;font-weight:400;">View all of your orders in our new Order</div>
<div class="t" style="left:1099.6px;top:621.69px;font-size:10.64px;color:#1d2327;font-weight:400;">Attribution extension.</div>
<div class="a" style="left:1099px;top:648px;width:217.7px;height:31.6px;background:#fff;border:1px solid #2271b1;border-radius:2px;box-sizing:border-box"></div>
<div class="t" style="left:1157.8px;top:658.78px;font-size:11.36px;color:#2271b1;font-weight:400;">Install the extension</div>
<div class="a" style="left:1085px;top:713px;width:247px;height:60px;background:#fff;border:1px solid #c3c4c7;box-sizing:border-box"></div>
<div class="t" style="left:1096.3px;top:722.98px;font-size:11.6px;color:#1d2327;font-weight:700;">Customer history</div>
<svg class="a" style="left:1267px;top:723.0px" width="60" height="12" viewBox="0 0 60 12"><path d="M1 8.5 L6.5 3 L12 8.5" fill="none" stroke="#50575e" stroke-width="1.6"/><path d="M24 3 L29.5 8.5 L35 3" fill="none" stroke="#50575e" stroke-width="1.6"/><path d="M48.5 8.3 L52.5 2.8 L56.5 8.3 Z" fill="#787c82"/></svg>
<div class="a" style="left:1086.5px;top:745.2px;width:244.1px;height:1px;background:#c3c4c7"></div>
<div class="t" style="left:1097px;top:764.19px;font-size:11.0px;color:#1d2327;font-weight:700;">Total sales</div>
<div class="a" style="left:1169.5px;top:764.5px;width:10px;height:10px;background:#50575e;border-radius:50%"></div>
<div class="a" style="left:1350px;top:96px;width:16px;height:670px;background:#2b2b2b"></div>
<svg class="a" style="left:1353px;top:100px" width="11" height="9" viewBox="0 0 11 9"><path d="M5.5 0.5 L10.5 8.5 H0.5 Z" fill="#a3a3a3"/></svg>
<div class="a" style="left:1354px;top:123px;width:9px;height:213px;background:#a3a3a3;border-radius:5px"></div>
<svg class="a" style="left:1353px;top:754px" width="11" height="9" viewBox="0 0 11 9"><path d="M5.5 8.5 L10.5 0.5 H0.5 Z" fill="#a3a3a3"/></svg>
<div class="a" style="left:0px;top:766px;width:1366px;height:2px;background:#1f1f1f"></div>
</body></html>
